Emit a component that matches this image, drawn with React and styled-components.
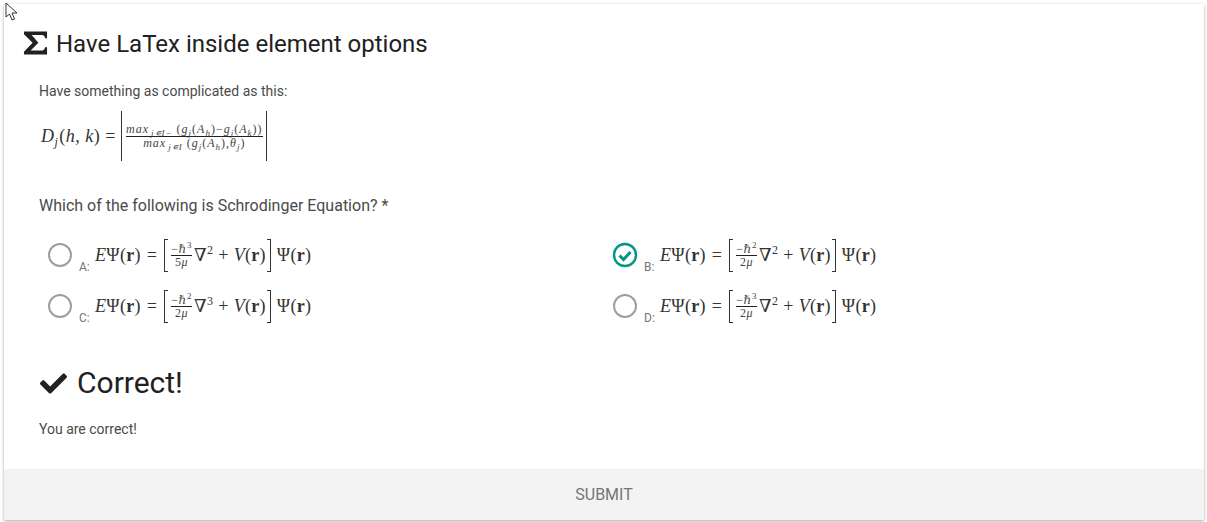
import React from "react";
import styled, { createGlobalStyle } from "styled-components";
import { FaCheck } from "react-icons/fa";

const GlobalStyle = createGlobalStyle`
  html, body {
    margin: 0;
    padding: 0;
    background: #ffffff;
  }
  body {
    font-family: Roboto, "Liberation Sans", sans-serif;
    color: #212121;
  }
`;

const Page = styled.div`
  position: relative;
  width: 1207px;
  height: 522px;
  padding: 4px 3px 2px 4px;
  box-sizing: border-box;
  overflow: hidden;
`;

const Card = styled.main`
  height: 516px;
  display: flex;
  flex-direction: column;
  background: #ffffff;
  box-shadow: 0 1px 3px rgba(0, 0, 0, 0.35);
`;

const Content = styled.div`
  flex: 1;
  padding: 24px 35px 0;
`;

const Title = styled.h2`
  display: flex;
  align-items: center;
  gap: 8px;
  height: 32px;
  margin: 0 0 0 -16px;
  font-size: 24px;
  font-weight: 400;
  line-height: 32px;
  color: #212121;
`;

const Sigma = styled.svg`
  flex: none;
  width: 25px;
  height: 24px;
  margin-bottom: 2px;
`;

const Text = styled.p`
  margin: ${(p) => p.$margin || 0};
  font-size: 14px;
  line-height: 20px;
  color: #4a4a4a;
`;

const BlockMath = styled.div`
  display: flex;
  align-items: center;
  height: 50px;
  margin: 10px 0 0 2px;
  font-family: "Liberation Serif", "DejaVu Serif", serif;
  font-size: 18px;
  color: #333333;
  letter-spacing: 0.5px;
  white-space: nowrap;
`;

const Bars = styled.div`
  display: flex;
  align-items: center;
  height: 50px;
  margin-left: 5px;
  padding: 0 3px 0 4px;
  border-left: 1px solid #333333;
  border-right: 1px solid #333333;
`;

const Fraction = styled.span`
  display: inline-flex;
  flex-direction: column;
  align-items: center;
  font-size: ${(p) => p.$size}px;
  line-height: ${(p) => p.$line}px;
  letter-spacing: ${(p) => p.$spacing || 0}px;
  color: #444444;
`;

const Numerator = styled.span`
  align-self: stretch;
  text-align: center;
  white-space: nowrap;
  border-bottom: 1px solid #222222;
`;

const Denominator = styled.span`
  white-space: nowrap;
`;

const Question = styled.div`
  margin: 33px 0 0;
  font-size: 16px;
  line-height: 24px;
  color: #4a4a4a;
`;

const Options = styled.div`
  display: grid;
  grid-template-columns: 565px 565px;
  grid-auto-rows: 51px;
  margin: 24px 0 0 9px;
`;

const Option = styled.label`
  display: flex;
  align-items: center;
  height: 26px;
`;

const Radio = styled.span`
  flex: none;
  width: 24px;
  height: 24px;
  box-sizing: border-box;
  border: 2px solid #9e9e9e;
  border-radius: 50%;
`;

const CheckedRadio = styled.svg`
  flex: none;
  width: 26px;
  height: 26px;
  margin: 0 -1px;
`;

const Letter = styled.span`
  align-self: flex-end;
  width: 16px;
  margin: 0 0 -6px 7px;
  font-size: 12px;
  line-height: 14px;
  color: #757575;
`;

const Formula = styled.span`
  display: inline-flex;
  align-items: center;
  font-family: "Liberation Serif", "DejaVu Serif", serif;
  font-size: 18px;
  letter-spacing: 0.3px;
  color: #333333;
  white-space: nowrap;
`;

const Bracket = styled.span`
  width: 4px;
  height: 33px;
  margin: ${(p) => (p.$right ? "0 6px 0 1px" : "0 3px 0 0")};
  box-sizing: border-box;
  border: 1px solid #333333;
  ${(p) => (p.$right ? "border-left: none;" : "border-right: none;")}
`;

const Space = styled.span`
  display: inline-block;
  width: ${(p) => p.$w}px;
`;

const Sup = styled.sup`
  font-size: ${(p) => p.$size || 12}px;
  line-height: 0;
  margin-bottom: 10px;
  vertical-align: super;
`;

const Sub = styled.sub`
  font-size: ${(p) => p.$size || 9}px;
  font-style: italic;
  line-height: 0;
  vertical-align: ${(p) => p.$drop || "sub"};
`;

const Result = styled.div`
  display: flex;
  align-items: center;
  gap: 10px;
  height: 44px;
  margin: 17px 0 0 1px;
  font-size: 30px;
  line-height: 44px;
  color: #212121;
`;

const CheckIcon = styled(FaCheck)`
  width: 27px;
  height: 27px;
`;

const Submit = styled.button`
  flex: none;
  height: 51px;
  border: none;
  background: #f3f3f3;
  font-family: inherit;
  font-size: 16px;
  color: #757575;
`;

const Cursor = styled.svg`
  position: absolute;
  top: 2px;
  left: 5px;
  width: 14px;
  height: 19px;
`;

const I = styled.i`
  font-style: italic;
`;

const B = styled.b`
  font-weight: 700;
`;

const Schrodinger = ({ power, denominator, nabla }) => (
  <Formula>
    <I>E</I>Ψ(<B>r</B>)
    <Space $w={6} />=<Space $w={7} />
    <Bracket />
    <Fraction $size={12} $line={12} $spacing={0.6}>
      <Numerator>
        −ℏ<Sup $size={9}>{power}</Sup>
      </Numerator>
      <Denominator>
        {denominator}
        <I>μ</I>
      </Denominator>
    </Fraction>
    <Space $w={2} />∇<Sup>{nabla}</Sup>
    <Space $w={5} />+<Space $w={5} />
    <I>V</I>(<B>r</B>)
    <Bracket $right />
    Ψ(<B>r</B>)
  </Formula>
);

const options = [
  { id: "A:", power: 3, denominator: "5", nabla: 2 },
  { id: "B:", power: 2, denominator: "2", nabla: 2, checked: true },
  { id: "C:", power: 2, denominator: "2", nabla: 3 },
  { id: "D:", power: 3, denominator: "2", nabla: 2 },
];

export default function App() {
  return (
    <Page>
      <GlobalStyle />
      <Card>
        <Content>
          <Title>
            <Sigma viewBox="0 0 26 24">
              <path fill="#212121" d="M1 0h24v7h-2c-.4-2.300-1.400-3.200-3.500-3.200H9l7 8-8 8h11c2.300 0 3.500-1 4-3.500H25v7.700H1v-3l9-9.200L1 3z" />
            </Sigma>
            Have LaTex inside element options
          </Title>
          <Text $margin="21px 0 0">Have something as complicated as this:</Text>
          <BlockMath>
            <span>
              <I>D</I>
              <Sub $size={12} $drop="-4px">j</Sub>
              <Space $w={1} />(<I>h</I>, <I>k</I>)<Space $w={5} />=
            </span>
            <Bars>
              <Fraction $size={12} $line={13} $spacing={1}>
                <Numerator>
                  <I>max</I>
                  <Space $w={2} />
                  <Sub>j∊I−</Sub> (<I>g</I>
                  <Sub>j</Sub>(<I>A</I>
                  <Sub>h</Sub>)−<I>g</I>
                  <Sub>j</Sub>(<I>A</I>
                  <Sub>k</Sub>))
                </Numerator>
                <Denominator>
                  <I>max</I>
                  <Space $w={2} />
                  <Sub>j∊I</Sub> (<I>g</I>
                  <Sub>j</Sub>(<I>A</I>
                  <Sub>h</Sub>),<I>θ</I>
                  <Sub>j</Sub>)
                </Denominator>
              </Fraction>
            </Bars>
          </BlockMath>
          <Question>Which of the following is Schrodinger Equation? *</Question>
          <Options>
            {options.map((o) => (
              <Option key={o.id}>
                {o.checked ? (
                  <CheckedRadio viewBox="0 0 26 26">
                    <circle cx="13" cy="13" r="11" fill="none" stroke="#009688" strokeWidth="2.400" />
                    <path d="M7.500 13.500l4 4 7-7.500" fill="none" stroke="#009688" strokeWidth="3" />
                  </CheckedRadio>
                ) : (
                  <Radio />
                )}
                <Letter>{o.id}</Letter>
                <Schrodinger power={o.power} denominator={o.denominator} nabla={o.nabla} />
              </Option>
            ))}
          </Options>
          <Result>
            <CheckIcon />
            Correct!
          </Result>
          <Text $margin="14px 0 0">You are correct!</Text>
        </Content>
        <Submit>SUBMIT</Submit>
      </Card>
      <Cursor viewBox="0 0 14 19">
        <path d="M1 1v14l3.500-3 2.500 6 2.500-1-2.500-6h5z" fill="#ffffff" stroke="#333333" strokeWidth="1" />
      </Cursor>
    </Page>
  );
}
